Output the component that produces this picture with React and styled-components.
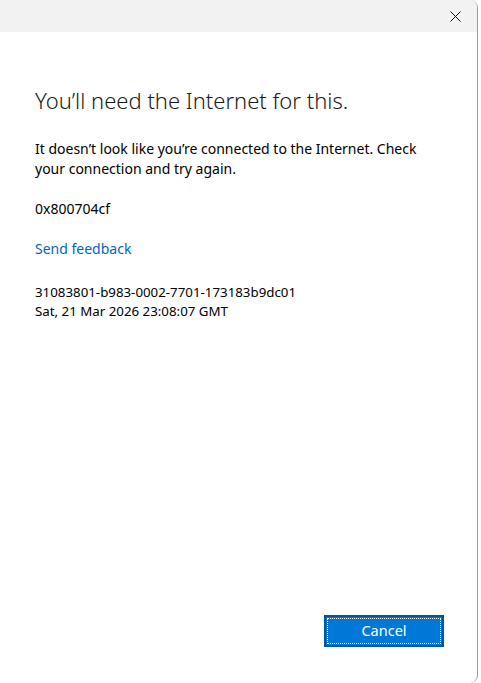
import React from "react";
import styled, { createGlobalStyle } from "styled-components";

const Global = createGlobalStyle`
  html, body { margin: 0; padding: 0; background: #ffffff; }
  body { font-family: "Segoe UI", "Noto Sans", "Open Sans", sans-serif; color: #000; }
`;

const Window = styled.div`
  width: 478px;
  height: 683px;
  box-sizing: border-box;
  border-right: 1px solid #9a9a9a;
  border-radius: 0 8px 8px 0;
  overflow: hidden;
  background: #ffffff;
  display: flex;
  flex-direction: column;
`;

const TitleBar = styled.div`
  height: 32px;
  flex: none;
  background: #f2f2f2;
  display: flex;
  justify-content: flex-end;
  align-items: stretch;
`;

const CloseButton = styled.button`
  width: 44px;
  border: 0;
  background: transparent;
  padding: 0;
  display: flex;
  align-items: center;
  justify-content: center;
  cursor: default;
`;

const Content = styled.div`
  flex: 1;
  display: flex;
  flex-direction: column;
  padding: 0 33px 0 35px;
`;

const Title = styled.h1`
  margin: 53px 0 0;
  font-family: "Segoe UI Light", "Noto Sans", "Open Sans", sans-serif;
  font-weight: 300;
  font-size: 22px;
  line-height: 30px;
  color: #1a1a1a;
`;

const Para = styled.p`
  margin: ${(p) => p.$top}px 0 0;
  font-size: ${(p) => p.$size || 14}px;
  line-height: ${(p) => p.$lh || 20}px;
  color: #000;
`;

const Link = styled.a`
  display: block;
  margin-top: 20px;
  font-size: 14px;
  line-height: 20px;
  color: #0067c0;
  text-decoration: none;
`;

const Footer = styled.div`
  margin-top: auto;
  display: flex;
  justify-content: flex-end;
  padding-bottom: 36px;
`;

const Button = styled.button`
  position: relative;
  width: 120px;
  height: 32px;
  box-sizing: border-box;
  border: 2px solid #00549a;
  background: #0078d7;
  color: #ffffff;
  font-family: "Segoe UI", "Noto Sans", "Open Sans", sans-serif;
  font-size: 14.5px;
  padding: 0 0 2px;
  cursor: default;
  &::after {
    content: "";
    position: absolute;
    inset: 1px;
    border: 1px dotted #ffffff;
  }
`;

export default function App() {
  return (
    <>
      <Global />
      <Window>
        <TitleBar>
          <CloseButton aria-label="Close">
            <svg width="11" height="11" viewBox="0 0 11 11">
              <path d="M0.5 0.5 L10.5 10.5 M10.5 0.5 L0.5 10.5" stroke="#111" strokeWidth="1" fill="none" />
            </svg>
          </CloseButton>
        </TitleBar>
        <Content>
          <Title>You’ll need the Internet for this.</Title>
          <Para $top={24}>
            It doesn’t look like you’re connected to the Internet. Check your connection and try again.
          </Para>
          <Para $top={20}>0x800704cf</Para>
          <Link href="#">Send feedback</Link>
          <Para $top={24} $size={13.3} $lh={19}>
            31083801-b983-0002-7701-173183b9dc01
            <br />
            Sat, 21 Mar 2026 23:08:07 GMT
          </Para>
          <Footer>
            <Button>Cancel</Button>
          </Footer>
        </Content>
      </Window>
    </>
  );
}
